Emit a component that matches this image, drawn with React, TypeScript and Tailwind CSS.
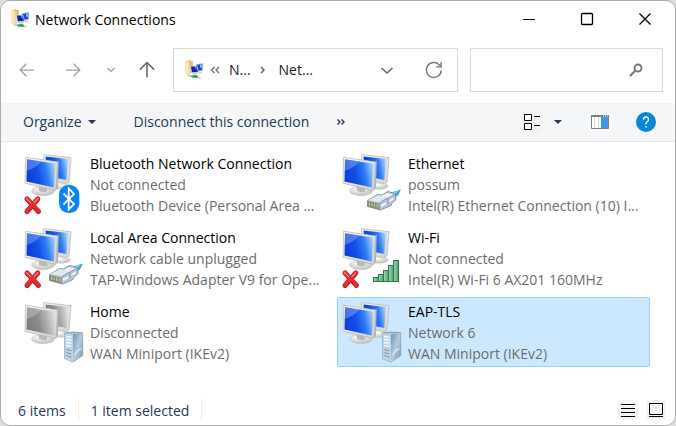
import { useId } from "react";
import type { ReactNode } from "react";

type Badge = "bluetooth" | "cable" | "wifi" | "server";

interface Connection {
  name: string;
  status: string;
  device: string;
  badge: Badge;
  unavailable?: boolean;
  muted?: boolean;
  selected?: boolean;
}

const connections: Connection[] = [
  { name: "Bluetooth Network Connection", status: "Not connected", device: "Bluetooth Device (Personal Area ...", badge: "bluetooth", unavailable: true },
  { name: "Ethernet", status: "possum", device: "Intel(R) Ethernet Connection (10) I...", badge: "cable" },
  { name: "Local Area Connection", status: "Network cable unplugged", device: "TAP-Windows Adapter V9 for Ope...", badge: "cable", unavailable: true },
  { name: "Wi-Fi", status: "Not connected", device: "Intel(R) Wi-Fi 6 AX201 160MHz", badge: "wifi", unavailable: true },
  { name: "Home", status: "Disconnected", device: "WAN Miniport (IKEv2)", badge: "server", muted: true },
  { name: "EAP-TLS", status: "Network 6", device: "WAN Miniport (IKEv2)", badge: "server", selected: true },
];

function BadgeShape({ badge, id }: { badge: Badge; id: string }) {
  if (badge === "bluetooth") {
    return (
      <g>
        <rect x="36" y="32" width="20.3" height="28" rx="9.5" fill="#0a84f5" />
        <path d="M40.5 40.5 51 51l-5.3 5.5v-21L51 41 40.5 51.5" fill="none" stroke="#fff" strokeWidth="1.8" />
      </g>
    );
  }
  if (badge === "cable") {
    return (
      <g strokeLinejoin="round">
        <path d="M47 42l6-3.500 7-2-3 6-6 3.500z" fill="#41acd3" />
        <path d="M49.500 41l7-2.500" stroke="#a9e2f3" strokeWidth="1.300" />
        <path d="M26.500 47.500l10-6 4 .5 6.500-3.500 7 2 1 6-4.500 4-.5 2-10.500 4.500-13-3.500z" fill="#b9c6d5" stroke="#76889f" strokeWidth="0.900" />
        <path d="M27.500 47l9.500-5 9 2.300-7.500 5z" fill="#e0e7ef" />
        <path d="M40 43l6-3 7 1.500-5.500 3.500z" fill="#eef3f8" />
        <path d="M38.500 50l8.500-5 6-3.500M38.500 50v7M47 45v6.500" stroke="#8394aa" strokeWidth="0.900" fill="none" />
        <path d="M26.800 48l10.700 2.500v5.700l-10.700-2.800z" fill="#7f8c7c" />
        <path d="M28.500 49.500v3.300M31 50v3.300M33.500 50.500v3.500M36 51v3.500" stroke="#d2cd78" strokeWidth="1" />
        <path d="M40 53l5.500-3M48.500 48l4-2.500" stroke="#f8fbff" strokeWidth="1.500" />
      </g>
    );
  }
  if (badge === "wifi") {
    return (
      <g fill={`url(#${id}g)`} stroke="#2c7d4d" strokeWidth="1">
        <rect x="32.500" y="50.500" width="5" height="4" />
        <rect x="37.500" y="47.500" width="5" height="7" />
        <rect x="42.500" y="43.500" width="5" height="11" />
        <rect x="47.500" y="38.500" width="5" height="16" />
        <rect x="52.500" y="33.500" width="5" height="21" />
      </g>
    );
  }
  return (
    <g strokeLinejoin="round">
      <path d="M41.500 32l8.500-1 9.700.8v22.700L50 61l-8.500-3.500z" fill="#a9c0d2" stroke="#7894aa" strokeWidth="0.800" />
      <path d="M41.500 32.500l8.500 1V61l-8.500-3.500z" fill="#c0d3e2" />
      <path d="M50 33.500l9.500-1.500v22.500L50 61z" fill={`url(#${id}v)`} />
      <path d="M43 35.500l5.500.7M43 38.500l5.500.7M43 41.500l5.500.7M43 44.500l5.500.9" stroke="#f7fbff" strokeWidth="1.300" />
      <path d="M43 48.500l5.500 1.200M43 51.500l5.500 1.500M43 54.500l5.500 1.800" stroke="#7c98ae" strokeWidth="1" />
      <path d="M51.500 54q3-5 7-6.500" stroke="#e3f0fa" strokeWidth="1.200" fill="none" />
    </g>
  );
}

function ConnectionIcon({ badge, unavailable, muted }: Pick<Connection, "badge" | "unavailable" | "muted">) {
  const id = useId().replace(/[^a-zA-Z0-9]/g, "");
  const stops = muted ? ["#7d7d7d", "#8a8a8a", "#b2b2b2", "#dedede"] : ["#0c3cd8", "#1250e8", "#2f7df8", "#a2d0ff"];
  return (
    <svg className="size-16 shrink-0" viewBox="0 0 64 64" aria-hidden="true">
      <defs>
        <linearGradient id={`${id}s`} x1="0" y1="0.6" x2="1" y2="0.4">
          <stop offset="0" stopColor={stops[0]} />
          <stop offset="0.4" stopColor={stops[1]} />
          <stop offset="0.7" stopColor={stops[2]} />
          <stop offset="1" stopColor={stops[3]} />
        </linearGradient>
        <linearGradient id={`${id}f`} x1="0" y1="0" x2="1" y2="1">
          <stop offset="0" stopColor="#f6f6f4" />
          <stop offset="1" stopColor="#d2d2cf" />
        </linearGradient>
        <radialGradient id={`${id}b`} cx="0.4" cy="0.3" r="0.7">
          <stop offset="0" stopColor="#ffffff" />
          <stop offset="1" stopColor="#bebebc" />
        </radialGradient>
        <linearGradient id={`${id}g`}>
          <stop offset="0" stopColor="#a9d9b8" />
          <stop offset="1" stopColor="#43a267" />
        </linearGradient>
        <linearGradient id={`${id}v`} x1="0" y1="0" x2="1" y2="1">
          <stop offset="0" stopColor="#6d93b3" />
          <stop offset="0.5" stopColor="#b4cbdc" />
          <stop offset="1" stopColor="#7597b2" />
        </linearGradient>
      </defs>
      <ellipse cx="38" cy="33" rx="9.500" ry="3.500" fill={`url(#${id}b)`} />
      <path d="M20.500 1.500L48 4.700l-2 24.500-4 1.500L22 26z" fill={`url(#${id}f)`} stroke="#bdbdbb" strokeWidth="0.800" strokeLinejoin="round" />
      <path d="M22.500 3.500L45 6l-1.700 21L24 23z" fill={`url(#${id}s)`} />
      <ellipse cx="20" cy="38" rx="11.500" ry="4.700" fill={`url(#${id}b)`} stroke="#c6c6c4" strokeWidth="0.600" />
      <path d="M15.500 31.500l9 2.500-.5 4.500q-4 1.500-8-.5z" fill="#b9b9b7" />
      <path d="M2.500 4.200l31.800 4.600 1.500-1.300-.8 27-2.200 3.300L2 30.500z" fill="#b3b3b1" />
      <path d="M2.500 4.200l32 4.800-1.700 28.300L2 30.300z" fill={`url(#${id}f)`} stroke="#bebebc" strokeWidth="0.700" strokeLinejoin="round" />
      <path d="M4 6.200l28.500 4.500-1.700 23.800L3.500 28.500z" fill={`url(#${id}s)`} />
      <path d="M4 6.200l14 2.200Q13 15 3.700 18z" fill="#fff" opacity="0.250" />
      <BadgeShape badge={badge} id={id} />
      {unavailable && (
        <g fill="none" strokeLinecap="round">
          <path d="M4 46l11.500 12.500M14.800 46L4 58.500" stroke="#c01822" strokeWidth="5" />
          <path d="M4 45.800l11.500 12.200M14.800 45.800L4 58" stroke="#e42c35" strokeWidth="3.500" />
          <path d="M3.500 45.500l4 4M14.800 45.500l-3.500 4" stroke="#f77f84" strokeWidth="1.200" />
        </g>
      )}
    </svg>
  );
}

function FolderNetworkIcon() {
  return (
    <svg className="size-5 shrink-0" viewBox="0 0 20 20" aria-hidden="true">
      <path d="M1 1.500L4.500 0 9 1.500v10L4.500 15.500 1 14z" fill="#f0d998" />
      <path d="M1 1.500l3.500 1v13L1 14z" fill="#f9eabb" />
      <path d="M4.500 0L9 1.500v4L6 6.500z" fill="#e1c276" />
      <path d="M12 4.500l7-1-.5 7-6 1z" fill="#1e49cc" stroke="#ccd4e0" strokeWidth="0.800" />
      <path d="M16 4.500l2.300-.3-.3 3.500-1.800.3z" fill="#86b6f5" />
      <path d="M6.500 6l6.500.3 1.500 6-7 .5z" fill="#0c24b4" stroke="#d5dbe5" strokeWidth="0.800" />
      <path d="M11 7l1.500.1.600 2.500-1.600-.3z" fill="#5b8df0" />
      <path d="M14.500 12l3-.6.800 1.300-3.300.8z" fill="#c9cdd2" />
      <path d="M8.500 13.200l4.500-.4.8 1-4.800.6z" fill="#c0c5cb" />
      <path d="M3.500 15.500l4 .8 9 1.500" stroke="#b8c4be" strokeWidth="1.300" fill="none" />
      <path d="M6.500 15.800l5.500-1 2.300 1.400-1.300 1.800-5-.4z" fill="#1fae58" />
    </svg>
  );
}

function Glyph({ children, className }: { children: ReactNode; className: string }) {
  return (
    <svg className={className} viewBox="0 0 16 16" fill="none" stroke="currentColor" aria-hidden="true">
      {children}
    </svg>
  );
}

function TitleBar() {
  return (
    <header className="flex h-9 items-center pl-[9px] text-black">
      <FolderNetworkIcon />
      <h1 className="ml-[5px] flex-1 pt-px">Network Connections</h1>
      <div className="flex self-stretch pr-px">
        <button type="button" aria-label="Minimize" className="grid w-[58px] place-items-center">
          <Glyph className="size-4"><path d="M2 8.500h12" /></Glyph>
        </button>
        <button type="button" aria-label="Maximize" className="grid w-[58px] place-items-center">
          <Glyph className="size-4"><rect x="2.500" y="2.500" width="11" height="11" rx="1" strokeWidth="1.300" /></Glyph>
        </button>
        <button type="button" aria-label="Close" className="grid w-[58px] place-items-center">
          <Glyph className="size-4"><path d="M2.500 2.500l11 11M13.500 2.500l-11 11" strokeWidth="1.300" /></Glyph>
        </button>
      </div>
    </header>
  );
}

function NavigationBar() {
  return (
    <nav className="flex h-[66px] items-center pr-3 pl-4 text-[#666666]">
      <button type="button" aria-label="Back" className="text-[#a0a0a0]">
        <Glyph className="size-5"><path d="M13.500 8h-11M7.500 3L2.500 8l5 5" /></Glyph>
      </button>
      <button type="button" aria-label="Forward" className="ml-[26px] text-[#a0a0a0]">
        <Glyph className="size-5"><path d="M2.500 8h11M8.500 3l5 5-5 5" /></Glyph>
      </button>
      <button type="button" aria-label="Recent locations" className="ml-5 text-[#999999]">
        <Glyph className="size-4"><path d="M4.500 6L8 9.500 11.500 6" strokeWidth="1.200" /></Glyph>
      </button>
      <button type="button" aria-label="Up" className="ml-[18px] text-[#666666]">
        <Glyph className="size-5"><path d="M8 14V2M2.300 7.700L8 2l5.700 5.700" strokeWidth="1.200" /></Glyph>
      </button>
      <div className="ml-4 flex h-11 min-w-0 flex-[8] items-center border border-[#d9d9d9] px-2.5 text-[#1a1a1a]">
        <FolderNetworkIcon />
        <button type="button" aria-label="Show parent folders" className="ml-[3px] text-[#666666]">
          <Glyph className="size-4"><path d="M7.500 5L4.500 8l3 3M12 5L9 8l3 3" strokeWidth="1.200" /></Glyph>
        </button>
        <button type="button" className="ml-1.5">N...</button>
        <Glyph className="mx-1 size-4 text-[#666666]"><path d="M6 5l3 3-3 3" strokeWidth="1.500" /></Glyph>
        <button type="button" className="ml-1">Net...</button>
        <button type="button" aria-label="Previous locations" className="ml-auto text-[#666666]">
          <Glyph className="size-4"><path d="M2.500 6L8 11l5.500-5" strokeWidth="1.500" /></Glyph>
        </button>
        <button type="button" aria-label="Refresh" className="mr-[3px] ml-[29px] text-[#777777]">
          <Glyph className="size-5"><path d="M13.800 8.500a6 6 0 1 1-1.700-4.700l1.400 1.500M13.700 1.500v4h-4" strokeWidth="1.100" /></Glyph>
        </button>
      </div>
      <label className="ml-3 flex h-11 min-w-0 flex-[5] items-center border border-[#d9d9d9] pr-[18px] pl-2 text-[#777777]">
        <input type="search" aria-label="Search Network Connections" className="min-w-0 flex-1 outline-none" />
        <Glyph className="size-4"><circle cx="10" cy="6" r="3.500" strokeWidth="1.900" /><path d="M7.500 8.500L2 14" strokeWidth="2" /></Glyph>
      </label>
    </nav>
  );
}

function Toolbar() {
  return (
    <div role="toolbar" aria-label="Commands" className="flex h-[39px] items-center border-b border-[#e8e8ea] bg-[#f4f6f8] pr-[19px] pl-[22px] text-[#1e395b]">
      <button type="button" className="flex items-center gap-1.5">
        Organize
        <svg className="h-1 w-2" viewBox="0 0 8 4" fill="currentColor" aria-hidden="true"><path d="M0 0h8L4 4z" /></svg>
      </button>
      <button type="button" className="ml-[38px]">Disconnect this connection</button>
      <button type="button" aria-label="More commands" className="ml-6">
        <Glyph className="size-4"><path d="M4.500 5.500L7 8l-2.500 2.500M8.500 5.500L11 8l-2.500 2.500" strokeWidth="1.400" /></Glyph>
      </button>
      <button type="button" aria-label="Change view" className="ml-auto bg-[#f1f1f1] text-black">
        <svg className="size-5" viewBox="0 0 20 20" fill="none" stroke="currentColor" aria-hidden="true">
          <path d="M2.500 2.500h7v6h-7zM2.500 11.500h7v6h-7z" fill="#fff" />
          <path d="M12 4.500h6M12 13.500h6" />
        </svg>
      </button>
      <button type="button" aria-label="View options" className="ml-3">
        <svg className="h-1 w-2" viewBox="0 0 8 4" fill="currentColor" aria-hidden="true"><path d="M0 0h8L4 4z" /></svg>
      </button>
      <button type="button" aria-label="Preview pane" className="ml-7">
        <svg className="h-4 w-5" viewBox="0 0 20 16" aria-hidden="true">
          <path d="M1.500 1.500h17v13h-17z" fill="#fff" stroke="#7a8087" />
          <path d="M1 1h18v2H1z" fill="#7a8087" />
          <path d="M4.500 3v11M8.500 3v11" stroke="#d5d8dc" />
          <path d="M11 3h7v11h-7z" fill="#3f9be5" />
          <path d="M13 2h1M15 2h1M17 2h1" stroke="#fff" />
        </svg>
      </button>
      <button type="button" aria-label="Help" className="ml-[26px] grid size-5 place-items-center rounded-full bg-[#0a86d8] text-white">
        <Glyph className="size-4"><path d="M5.500 5.800Q5.500 3 8 3t2.500 2.500Q10.500 7 9 8T8 10.500" strokeWidth="1.300" /><path d="M8 12v1.600" strokeWidth="1.500" /></Glyph>
      </button>
    </div>
  );
}

function ConnectionTile({ connection }: { connection: Connection }) {
  const tone = connection.selected
    ? "border-[#99d1ff] bg-[#cce8ff]"
    : "border-transparent";
  return (
    <button type="button" aria-pressed={!!connection.selected} className={`flex min-w-0 gap-[3px] overflow-hidden rounded-xs border p-[3px] pb-px text-left leading-[21px] whitespace-nowrap text-[#6d6d6d] ${tone}`}>
      <ConnectionIcon badge={connection.badge} unavailable={connection.unavailable} muted={connection.muted} />
      <span className="flex flex-col">
        <span className="text-black">{connection.name}</span>
        <span>{connection.status}</span>
        <span>{connection.device}</span>
      </span>
    </button>
  );
}

function StatusBar() {
  return (
    <footer className="flex h-[30px] items-center pr-[9px] pl-[17px] text-[#1e395b]">
      <span className="border-r border-[#f0f0f0] pt-0.5 pr-3">6 items</span>
      <span className="border-r border-[#f0f0f0] px-3 pt-0.5">1 item selected</span>
      <button type="button" aria-label="Details view" className="ml-auto rounded-xs bg-[#f5f5f5] text-black">
        <svg className="size-5" viewBox="0 0 20 20" fill="none" stroke="currentColor" aria-hidden="true"><path d="M3 4.500h14M3 8.500h14M3 12.500h14M3 16.500h14" /></svg>
      </button>
      <button type="button" aria-label="Large icons view" className="ml-2 rounded-xs bg-[#f5f5f5] text-black">
        <svg className="size-5" viewBox="0 0 20 20" fill="none" stroke="currentColor" aria-hidden="true"><path d="M3.500 3.500h13v11h-13zM3 16.500h14" /></svg>
      </button>
    </footer>
  );
}

export default function App() {
  return (
    <div className="min-h-screen bg-[#dedede] font-['Open_Sans',sans-serif] text-sm">
      <div className="flex min-h-screen flex-col overflow-hidden rounded-[10px] border border-[#adadad] bg-white">
        <TitleBar />
        <NavigationBar />
        <Toolbar />
        <main className="grid flex-1 grid-cols-2 content-start gap-x-[5px] gap-y-1 pt-[7px] pr-[25px] pl-[18px]">
          {connections.map((connection) => (
            <ConnectionTile key={connection.name} connection={connection} />
          ))}
        </main>
        <StatusBar />
      </div>
    </div>
  );
}
